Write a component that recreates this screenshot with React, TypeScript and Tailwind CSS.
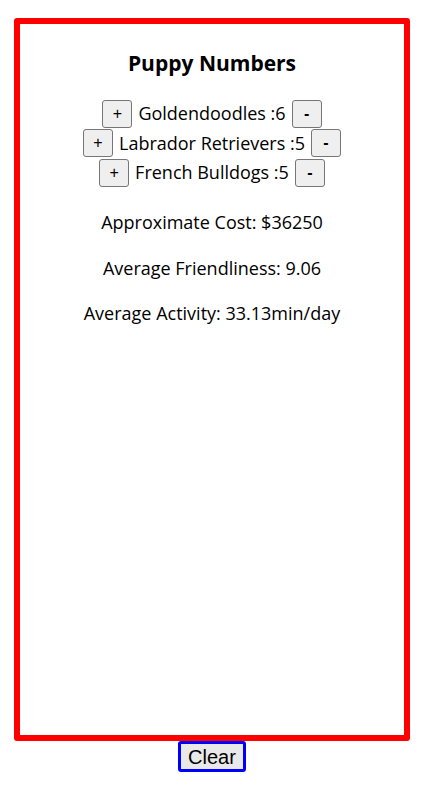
import React from "react";

const rows = [
  { name: "Goldendoodles", n: 6 },
  { name: "Labrador Retrievers", n: 5 },
  { name: "French Bulldogs", n: 5 },
];

function Btn({ label }: { label: string }) {
  return (
    <button className="w-[30px] h-[28px] bg-[#efefef] border border-[#767676] rounded-[3px] text-[16px] font-bold text-black flex items-center justify-center leading-none" style={{ fontFamily: "'Liberation Sans', Arial, sans-serif" }}>
      {label === "+" ? <span className="font-normal">+</span> : label}
    </button>
  );
}

export default function App() {
  return (
    <div className="bg-white w-[429px] h-[801px] pt-[18px]" style={{ fontFamily: "'Open Sans', 'Noto Sans', sans-serif" }}>
      <div className="mx-[14px] w-[396px] h-[723px] border-[6px] border-[#ff0000] rounded-[3px] flex flex-col items-center text-black">
        <h1 className="mt-[21px] text-[21px] font-bold leading-[36px]">Puppy Numbers</h1>
        <div className="mt-[18px] flex flex-col items-center">
          {rows.map((r) => (
            <div key={r.name} className="flex items-center gap-[6px] h-[29.5px]">
              <Btn label="+" />
              <span className="text-[18px]">{r.name} :{r.n}</span>
              <Btn label="-" />
            </div>
          ))}
        </div>
        <p className="mt-[21px] text-[18px] leading-[26px]">Approximate Cost: $36250</p>
        <p className="mt-[20px] text-[18px] leading-[26px]">Average Friendliness: 9.06</p>
        <p className="mt-[19px] text-[18px] leading-[26px]">Average Activity: 33.13min/day</p>
      </div>
      <div className="mx-[14px] w-[396px] flex justify-center">
        <button className="w-[68px] h-[31px] px-0 bg-[#e9e9e9] border-[3px] border-[#0000ff] rounded-[3px] text-[20px] text-black leading-none" style={{ fontFamily: "'Liberation Sans', Arial, sans-serif" }}>
          Clear
        </button>
      </div>
    </div>
  );
}
